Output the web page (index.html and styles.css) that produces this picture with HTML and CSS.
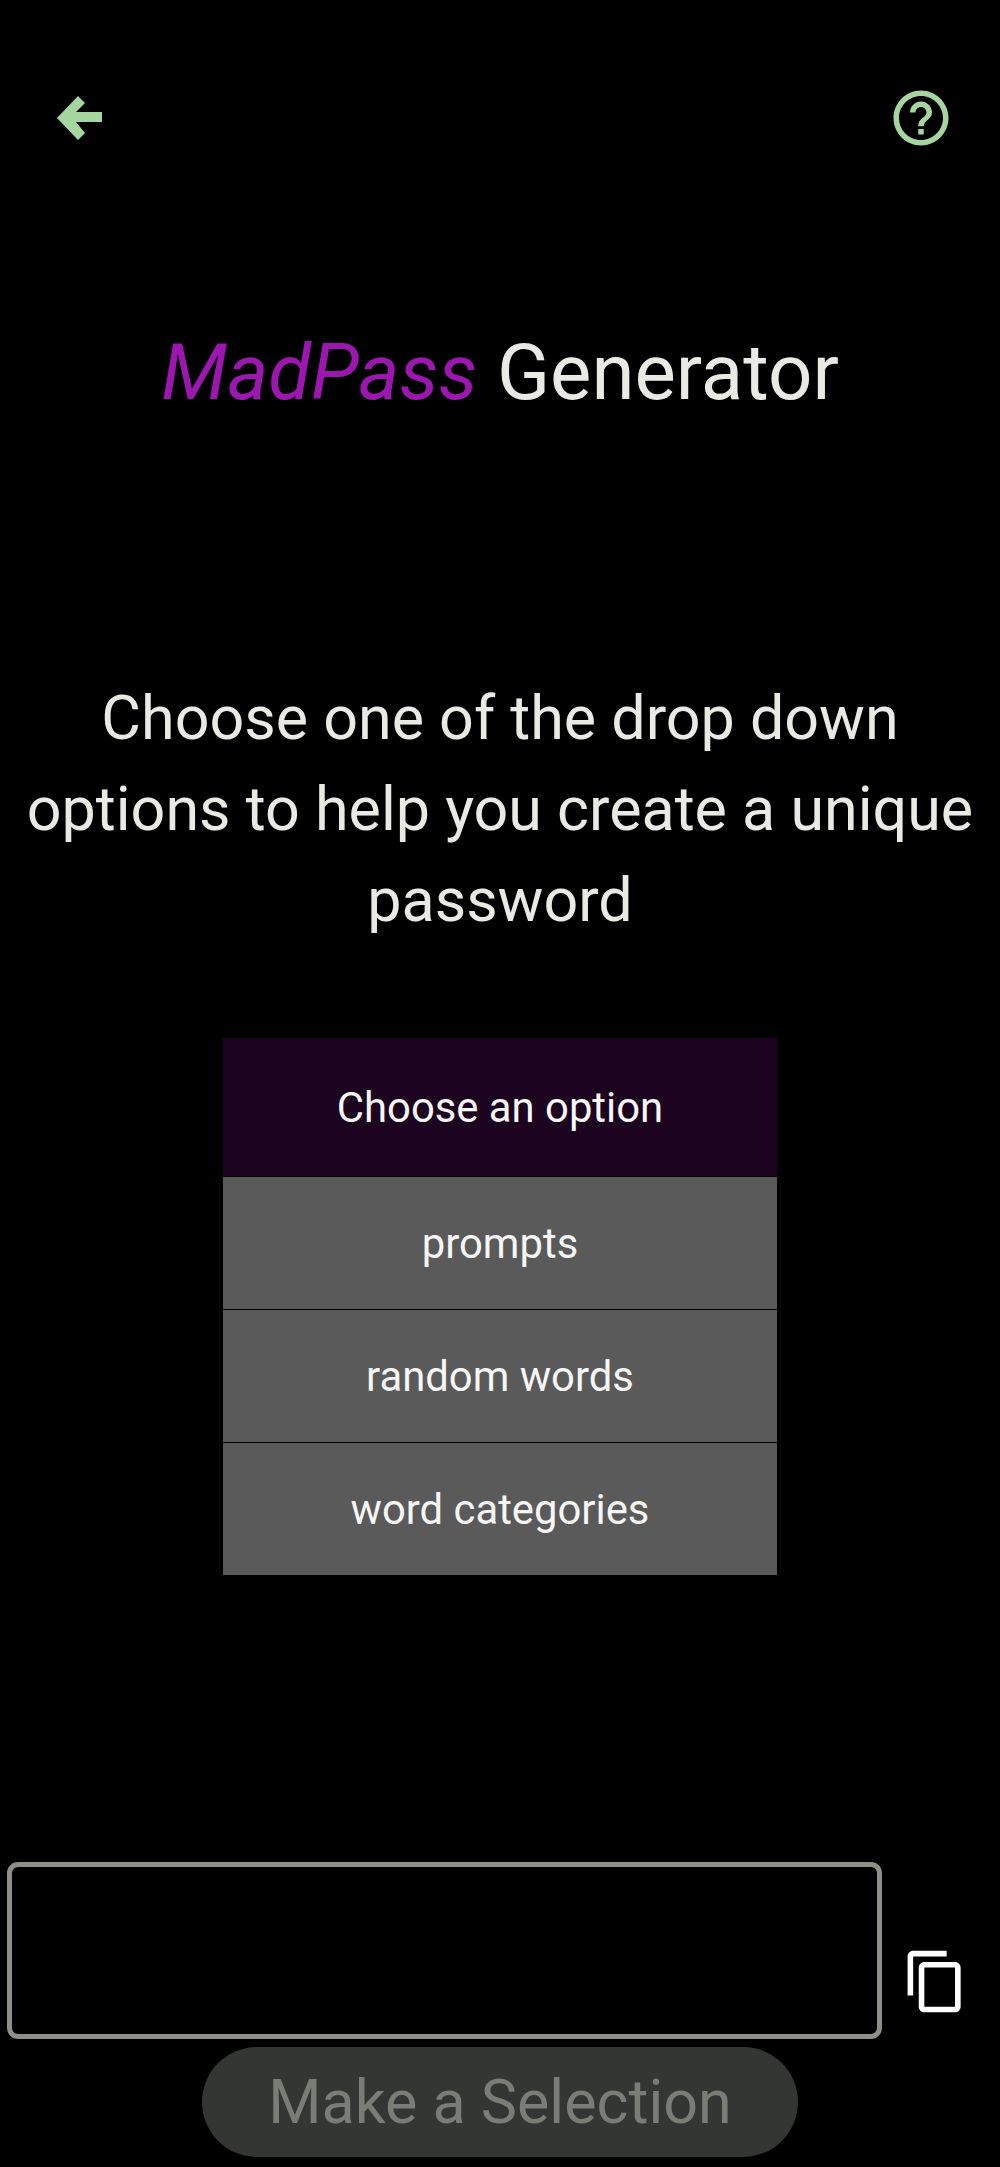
FILE: index.html
```html
<!DOCTYPE html>
<html lang="en">
<head>
  <meta charset="UTF-8" />
  <meta name="viewport" content="width=device-width, initial-scale=1" />
  <title>MadPass Generator</title>
  <link rel="stylesheet" href="styles.css">
</head>
<body>

<header class="topbar">
  <button class="icon-btn" aria-label="Back">
    <svg class="back-icon" viewBox="0 0 45 44"><path d="M0 22 21 0l7 7-9 9h26v10H19l9 11-7 7z" /></svg>
  </button>
  <button class="icon-btn" aria-label="Help">
    <svg class="help-icon" viewBox="0 0 24 24"><path d="M11 18h2v-2h-2v2zm1-16C6.48 2 2 6.48 2 12s4.48 10 10 10 10-4.48 10-10S17.52 2 12 2zm0 18c-4.41 0-8-3.59-8-8s3.59-8 8-8 8 3.59 8 8-3.59 8-8 8zm0-14c-2.21 0-4 1.79-4 4h2c0-1.1.9-2 2-2s2 .9 2 2c0 2-3 1.75-3 5h2c0-2.25 3-2.5 3-5 0-2.21-1.79-4-4-4z" /></svg>
  </button>
</header>

<h1 class="title"><em>MadPass</em> Generator</h1>

<p class="intro">Choose one of the drop down options to help you create a unique password</p>

<ul class="dropdown">
  <li class="dropdown-head">Choose an option</li>
  <li>prompts</li>
  <li>random words</li>
  <li>word categories</li>
</ul>

<div class="output-row">
  <div class="output-box"></div>
  <button class="icon-btn" aria-label="Copy">
    <svg class="copy-icon" viewBox="0 0 24 24"><path d="M16 1H4c-1.1 0-2 .9-2 2v14h2V3h12V1zm3 4H8c-1.1 0-2 .9-2 2v14c0 1.1.9 2 2 2h11c1.1 0 2-.9 2-2V7c0-1.1-.9-2-2-2zm0 16H8V7h11v14z" /></svg>
  </button>
</div>

<button class="generate" disabled>Make a Selection</button>

</body>
</html>
```

FILE: styles.css
```css
* {
  margin: 0; padding: 0; box-sizing: border-box;
}
body {
  font-family: Roboto, 'Liberation Sans', sans-serif;
  background: #000;
  color: #e9eae4;
  height: 2167px;
  overflow: hidden;
  display: flex;
  flex-direction: column;
  align-items: center;
}

.icon-btn {
  background: none;
  border: none;
  display: flex;
}

.topbar {
  width: 100%;
  height: 151px;
  padding: 85px 46px 0 57px;
  display: flex;
  justify-content: space-between;
}
.back-icon {
  width: 45px;
  height: 44px;
  margin-top: 11px;
  fill: #a5d6a0;
}
.help-icon {
  width: 66px;
  height: 66px;
  fill: #a5d6a0;
}

.title {
  margin-top: 172px;
  font-size: 78px;
  font-weight: 400;
  line-height: 100px;
}
.title em {
  color: #9c16b0;
}

.intro {
  margin-top: 250px;
  width: 990px;
  font-size: 61px;
  line-height: 91px;
  text-align: center;
}

.dropdown {
  margin-top: 92px;
  width: 554px;
  list-style: none;
  display: flex;
  flex-direction: column;
  gap: 1px;
}
.dropdown li {
  height: 132px;
  background: #5a5a5a;
  color: #f6f6f6;
  font-size: 41.8px;
  display: flex;
  align-items: center;
  justify-content: center;
}
.dropdown .dropdown-head {
  height: 138px;
  background: #1c0420;
}

.output-row {
  margin-top: 287px;
  width: 100%;
  padding: 0 31px 0 7px;
  display: flex;
  align-items: flex-start;
  justify-content: space-between;
}
.output-box {
  width: 875px;
  height: 177px;
  border: 5px solid #8d9087;
  border-radius: 11px;
}
.copy-icon {
  width: 67px;
  height: 67px;
  margin-top: 86px;
  fill: #fff;
}

.generate {
  margin-top: 8px;
  width: 596px;
  height: 110px;
  border: none;
  border-radius: 55px;
  background: #333632;
  color: #7a7d76;
  font-family: inherit;
  font-size: 61px;
}
```
